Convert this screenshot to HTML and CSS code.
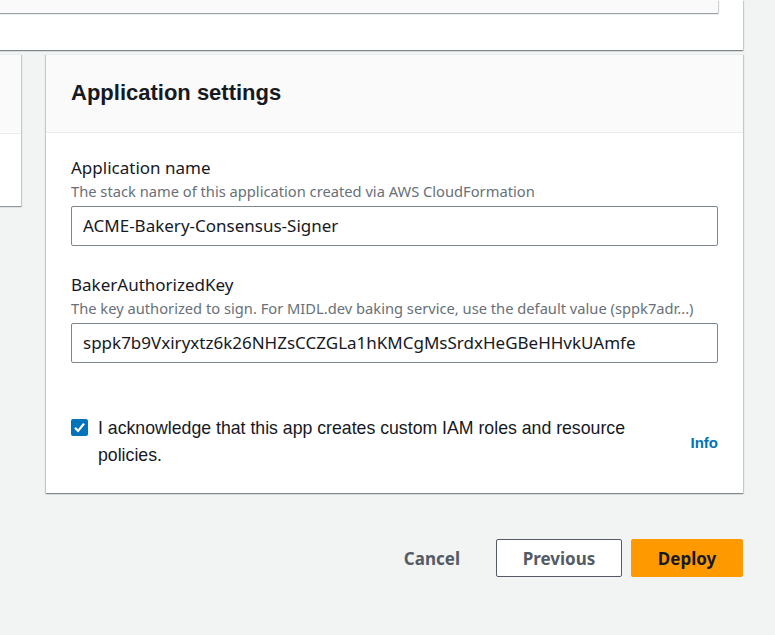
FILE: index.html
```html
<!DOCTYPE html>
<html>
<head>
<meta charset="utf-8">
<link rel="stylesheet" href="styles.css">
</head>
<body>
<div class="page">
  <div class="top-card">
    <div class="top-inner"></div>
  </div>
  <div class="row">
    <div class="side-card">
      <div class="side-head"></div>
    </div>
    <section class="card">
      <header class="card-head"><h2>Application settings</h2></header>
      <div class="card-body">
        <div class="field">
          <div class="label">Application name</div>
          <div class="desc">The stack name of this application created via AWS CloudFormation</div>
          <div class="input">ACME-Bakery-Consensus-Signer</div>
        </div>
        <div class="field">
          <div class="label">BakerAuthorizedKey</div>
          <div class="desc">The key authorized to sign. For MIDL.dev baking service, use the default value (sppk7adr...)</div>
          <div class="input">sppk7b9Vxiryxtz6k26NHZsCCZGLa1hKMCgMsSrdxHeGBeHHvkUAmfe</div>
        </div>
        <div class="ack">
          <span class="check"><svg width="17" height="17" viewBox="0 0 17 17"><rect width="17" height="17" rx="2" fill="#0073bb"/><path d="M4 8.8 7.1 11.9 13 4.6" fill="none" stroke="#fff" stroke-width="2.3"/></svg></span>
          <span class="ack-text">I acknowledge that this app creates custom IAM roles and resource policies.</span>
          <a class="info">Info</a>
        </div>
      </div>
    </section>
  </div>
  <div class="actions">
    <button class="btn link">Cancel</button>
    <button class="btn normal">Previous</button>
    <button class="btn primary">Deploy</button>
  </div>
</div>
</body>
</html>
```
FILE: styles.css
```css
html, body { margin: 0; padding: 0; }
body {
  background: #f2f3f3;
  font-family: "Noto Sans", "Open Sans", sans-serif;
  color: #16191f;
  width: 775px;
  height: 635px;
  overflow: hidden;
}
.page { padding-right: 32px; }
.top-card {
  background: #fff;
  height: 50px;
  margin-left: -20px;
  padding-right: 25px;
  box-shadow: 0 1px 1px 0 rgba(0,28,36,.3), 1px 1px 1px 0 rgba(0,28,36,.15), -1px 1px 1px 0 rgba(0,28,36,.15);
}
.top-inner {
  height: 13px;
  background: #fafafa;
  box-shadow: 0 1px 1px 0 rgba(0,28,36,.3), 1px 1px 1px 0 rgba(0,28,36,.15);
}
.row {
  display: grid;
  grid-template-columns: 21px 1fr;
  column-gap: 25px;
  margin-top: 4px;
  align-items: start;
}
.side-card {
  margin-left: -20px;
  height: 151px;
  background: #fff;
  box-shadow: 0 1px 1px 0 rgba(0,28,36,.3), 1px 1px 1px 0 rgba(0,28,36,.15);
  border-top: 1px solid #eaeded;
}
.side-head {
  height: 78px;
  background: #fafafa;
  border-bottom: 1px solid #eaeded;
}
.card {
  background: #fff;
  height: 439px;
  box-sizing: border-box;
  border-top: 1px solid #eaeded;
  box-shadow: 0 1px 1px 0 rgba(0,28,36,.3), 1px 1px 1px 0 rgba(0,28,36,.15), -1px 1px 1px 0 rgba(0,28,36,.15);
}
.card-head {
  background: #fafafa;
  border-bottom: 1px solid #eaeded;
  height: 78px;
  box-sizing: border-box;
  padding: 24px 25px 0;
}
.card-head h2 {
  margin: 0;
  font-family: "Liberation Sans", Arial, sans-serif;
  font-weight: 700;
  font-size: 22px;
  line-height: 28px;
  color: #16191f;
}
.card-body {
  padding: 23px 25px 0;
}
.field { margin-bottom: 27px; }
.field:last-of-type { margin-bottom: 0; }
.label {
  font-size: 17px;
  line-height: 24px;
  color: #16191f;
}
.desc {
  font-size: 14.7px;
  line-height: 22px;
  color: #687078;
}
.input {
  margin-top: 4px;
  height: 40px;
  box-sizing: border-box;
  border: 1px solid #7d8791;
  border-radius: 2px;
  padding: 0 11px;
  font-size: 17px;
  line-height: 38px;
  color: #16191f;
  white-space: nowrap;
}
.ack {
  display: flex;
  align-items: flex-start;
  margin-top: 52px;
}
.check { width: 17px; height: 17px; margin-top: 4px; flex: none; }
.check svg { display: block; }
.ack-text {
  margin-left: 10px;
  width: 570px;
  font-family: "Liberation Sans", Arial, sans-serif;
  font-size: 17.7px;
  line-height: 27px;
  color: #16191f;
}
.info {
  margin-left: auto;
  align-self: center;
  font-family: "Liberation Sans", Arial, sans-serif;
  font-weight: 700;
  font-size: 15px;
  color: #0073bb;
}
.actions {
  display: flex;
  justify-content: flex-end;
  align-items: center;
  margin-top: 46px;
  gap: 9px;
}
.btn {
  font-family: "Noto Sans", "Open Sans", sans-serif;
  font-weight: 700;
  font-size: 17px;
  height: 38px;
  box-sizing: border-box;
  border-radius: 2px;
  padding: 0;
  cursor: pointer;
}
.btn.link {
  background: none;
  border: none;
  color: #545b64;
  margin-right: 17px;
  padding: 0 10px;
}
.btn.normal {
  background: #fff;
  border: 1px solid #545b64;
  color: #545b64;
  width: 126px;
}
.btn.primary {
  background: #ff9900;
  border: 1px solid #ff9900;
  color: #16191f;
  width: 112px;
}
```
